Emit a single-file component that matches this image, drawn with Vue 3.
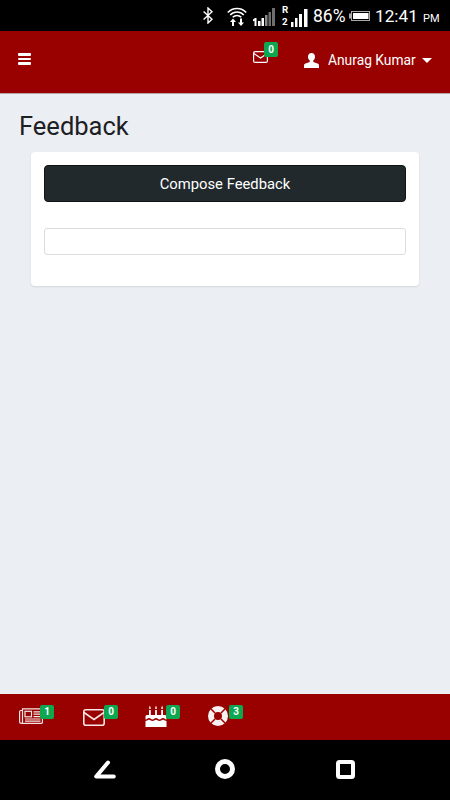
<script setup>
const items = [
  { key: 'news', n: 1 },
  { key: 'mail', n: 0 },
  { key: 'cake', n: 0 },
  { key: 'help', n: 3 },
]
</script>

<template>
  <div class="page">
    <div class="status">
      <svg class="st-bt" width="10" height="17" viewBox="0 0 10 17" fill="none" stroke="#fff" stroke-width="1.4"><path d="M.6 4.500 9 12.200 5 16V1l4 3.800L.6 12.500"/></svg>
      <svg class="st-wifi" width="20" height="20" viewBox="0 0 20 20" fill="none" stroke="#fff" stroke-width="1.5"><path d="M.8 6.500C5.500 1 14.500 1 19.200 6.500M3.200 9C7 5 13 5 16.800 9M5.700 11.300C8.200 8.800 11.800 8.800 14.300 11.300"/><path d="M6 12.500 3 16h2v4h2v-4h2zM14 20l3-3.500h-2v-4h-2v4h-2z" fill="#fff" stroke="none"/></svg>
      <svg class="st-sig1" width="25" height="18" viewBox="0 0 25 18"><path d="M1 11.500 3 10h1.500v8H2.500v-5.500L1 13.500z" fill="#fff"/><rect x="6" y="13" width="2.500" height="5" fill="#fff"/><rect x="9.500" y="10" width="2.500" height="8" fill="#fff"/><rect x="13" y="7" width="2.500" height="11" fill="#8a8a8a"/><rect x="16.500" y="4" width="2.500" height="14" fill="#6e6e6e"/><rect x="20" y="0" width="3" height="18" fill="#6e6e6e"/></svg>
      <div class="st-sig2">
        <span class="rtxt">R<br />2</span>
        <svg width="17" height="19" viewBox="0 0 17 19"><rect x="0" y="14" width="2.500" height="5" fill="#fff"/><rect x="4" y="10" width="2.500" height="9" fill="#fff"/><rect x="8" y="6" width="3" height="13" fill="#fff"/><rect x="13" y="1" width="3.500" height="18" fill="#fff"/></svg>
      </div>
      <span class="st-pct">86%</span>
      <svg class="st-bat" width="21" height="12" viewBox="0 0 21 12"><rect x="0" y="3.500" width="2" height="5" fill="#aaa"/><rect x="2.500" y="1.500" width="18" height="9" fill="none" stroke="#aaa"/><rect x="4" y="3" width="15.500" height="6" fill="#fff"/></svg>
      <span class="st-time">12:41</span><span class="st-pm">PM</span>
    </div>

    <header class="top">
      <div class="burger"><i></i><i></i><i></i></div>
      <div class="top-mail">
        <svg width="15" height="12" viewBox="0 0 15 12" fill="none" stroke="#fff" stroke-width="1.200"><rect x="0.600" y="0.600" width="13.800" height="10.800" rx="1.500"/><path d="M0.800 2.500 7.500 7l6.700-4.500"/></svg>
        <span class="badge top-badge">0</span>
      </div>
      <svg class="user" width="15" height="15" viewBox="0 0 15 15" fill="#fff"><path d="M7.500 0C5.400 0 4 1.600 4 3.800c0 1.600.7 3 1.700 3.800v1.300L1.600 10.600C.6 11 0 11.700 0 12.600V15h15v-2.400c0-.9-.6-1.600-1.600-2L9.300 8.900V7.600c1-.8 1.700-2.200 1.700-3.800C11 1.600 9.600 0 7.500 0z"/></svg>
      <span class="uname">Anurag Kumar</span>
      <span class="caret"></span>
    </header>

    <main class="content">
      <h1 class="title">Feedback</h1>
      <section class="card">
        <button class="compose">Compose Feedback</button>
        <div class="field"></div>
      </section>
    </main>

    <footer class="bottom">
      <div v-for="it in items" :key="it.key" class="tab">
        <svg v-if="it.key === 'news'" class="ic-news" width="24" height="16" viewBox="0 0 24 16" fill="none" stroke="#f6e6e6" stroke-width="1.200"><path d="M3.500 2.500H1.800A1.200 1.200 0 0 0 .6 3.700v10A1.700 1.700 0 0 0 2.300 15.400"/><path d="M3.500 14V.8h20V14a1.400 1.400 0 0 1-1.400 1.400H2.300A1.500 1.500 0 0 0 3.500 14z"/><rect x="6" y="3.300" width="6.500" height="5.500"/><path d="M14.500 3.800h7M14.500 6.200h7M14.500 8.600h7M6 11h15.500M6 13.200h15.500"/></svg>
        <svg v-else-if="it.key === 'mail'" class="ic-mail" width="22" height="17" viewBox="0 0 22 17" fill="none" stroke="#f6e6e6" stroke-width="1.600"><rect x="0.800" y="0.800" width="20.400" height="15.400" rx="2"/><path d="M1 3.500l10 7 10-7"/></svg>
        <svg v-else-if="it.key === 'cake'" class="ic-cake" width="22" height="22" viewBox="0 0 22 22" fill="#fff"><rect x="4" y="5" width="1.800" height="6"/><rect x="10.100" y="5" width="1.800" height="6"/><rect x="16.200" y="5" width="1.800" height="6"/><path d="M4.900 .5 6 3.800H3.800zM11 .5l1.100 3.300H9.900zM17.100 .5l1.100 3.300H16z"/><path d="M2 10h18a1.500 1.500 0 0 1 1.500 1.500v3c-1.700 0-1.700-1.500-3.500-1.500s-1.800 1.500-3.500 1.500S12.800 13 11 13s-1.800 1.500-3.500 1.500S5.800 13 4 13s-1.800 1.500-3.500 1.500v-3A1.500 1.500 0 0 1 2 10z"/><path d="M.5 16c1.700 0 1.800-1.300 3.500-1.300s1.800 1.300 3.500 1.300 1.800-1.300 3.500-1.300 1.800 1.300 3.500 1.300 1.800-1.300 3.500-1.300 1.800 1.300 3.500 1.300v6H.5z"/></svg>
        <svg v-else class="ic-help" width="20" height="20" viewBox="0 0 20 20"><circle cx="10" cy="10" r="7" fill="none" stroke="#f8f0f0" stroke-width="6"/><g stroke="#990000" stroke-width="1.500"><path d="M2.800 2.800 7 7M17.200 2.800 13 7M2.800 17.200 7 13M17.200 17.200 13 13"/></g></svg>
        <span class="badge">{{ it.n }}</span>
      </div>
    </footer>

    <nav class="sysnav">
      <svg width="22" height="19" viewBox="0 0 22 19" fill="none" stroke="#fff" stroke-width="4" stroke-linecap="round" stroke-linejoin="round"><path d="M14 2.500 2.200 16.500h17.600"/></svg>
      <svg class="nav-home" width="22" height="20" viewBox="0 0 22 20" fill="none" stroke="#fff" stroke-width="5"><circle cx="11" cy="10" r="7.500"/></svg>
      <svg width="19" height="19" viewBox="0 0 19 19" fill="none" stroke="#fff" stroke-width="4"><rect x="2" y="2" width="15" height="15" rx="1.500"/></svg>
    </nav>
  </div>
</template>

<style scoped>
.page { width: 450px; height: 800px; display: flex; flex-direction: column; background: #ebeef3; font-family: Roboto, "Liberation Sans", sans-serif; overflow: hidden; }
.status { height: 31px; flex: none; background: #000; color: #fff; display: flex; align-items: center; padding-left: 203px; box-sizing: border-box; }
.st-bt { margin-right: 14px; }
.st-wifi { margin-right: 5px; margin-top: 1px; }
.st-sig1 { margin-right: 5px; margin-top: 3px; }
.st-sig2 { display: flex; align-items: flex-end; width: 26px; margin-right: 5px; }
.st-sig2 svg { margin-left: 1px; }
.rtxt { display: block; width: 8px; font-size: 9.800px; font-weight: 700; line-height: 11.500px; }
.st-pct { font-size: 17.500px; width: 31px; margin-right: 5px; white-space: nowrap; }
.st-bat { margin-right: 5px; }
.st-time { font-size: 17.200px; width: 42px; margin-right: 6px; white-space: nowrap; }
.st-pm { font-size: 11px; margin-top: 5px; }
.top { height: 63px; flex: none; box-sizing: border-box; background: #990000; display: flex; align-items: flex-start; color: #fff; padding-left: 18px; border-bottom: 1px solid #b8a0a6; }
.burger { display: flex; flex-direction: column; gap: 2px; width: 13px; margin-top: 22px; margin-right: 222px; }
.burger i { display: block; height: 2.500px; background: #fff; border-radius: 1px; }
.top-mail { position: relative; width: 15px; height: 12px; margin-top: 20px; margin-right: 36px; line-height: 0; }
.badge { position: absolute; left: 21px; top: 0; width: 14px; height: 14px; background: #0ca750; color: #fff; font-size: 10px; font-weight: 700; line-height: 14px; text-align: center; border-radius: 2px; }
.top-badge { left: 11px; top: -9px; height: 15px; line-height: 15px; }
.user { margin-top: 22px; margin-right: 9px; }
.uname { font-size: 13.800px; line-height: 20px; margin-top: 19px; margin-right: 6px; white-space: nowrap; }
.caret { width: 0; height: 0; border-left: 5px solid transparent; border-right: 5px solid transparent; border-top: 5px solid #fff; margin-top: 27px; }
.content { flex: 1; min-height: 0; padding: 0 31px; }
.title { margin: 17px 0 11px -12px; font-size: 25.500px; font-weight: 400; line-height: 30px; color: #1d2023; }
.card { height: 134px; box-sizing: border-box; background: #fff; border-radius: 4px; box-shadow: 0 1px 2px rgba(0,0,0,.1); padding: 13px; }
.compose { display: block; width: 100%; height: 37px; background: #22292c; border: 1px solid #0f1416; border-radius: 4px; color: #fff; font: 400 14.800px Roboto, sans-serif; padding: 0; }
.field { height: 27px; margin-top: 26px; box-sizing: border-box; background: #fff; border: 1px solid #dcdcdc; border-radius: 3px; }
.bottom { height: 46px; flex: none; background: #990000; display: flex; align-items: flex-start; padding: 11px 0 0 19px; box-sizing: border-box; }
.tab { position: relative; width: 63px; height: 22px; line-height: 0; }
.tab:first-child { width: 64px; }
.tab:nth-child(2) { width: 62px; }
.ic-news { margin-top: 3px; }
.ic-mail { margin-top: 4px; }
.ic-help { margin-top: 1px; }
.sysnav { height: 60px; flex: none; box-sizing: border-box; background: #000; display: flex; align-items: center; padding: 0 0 2px 94px; }
.nav-home { margin: 0 100px 0 98px; }
</style>
